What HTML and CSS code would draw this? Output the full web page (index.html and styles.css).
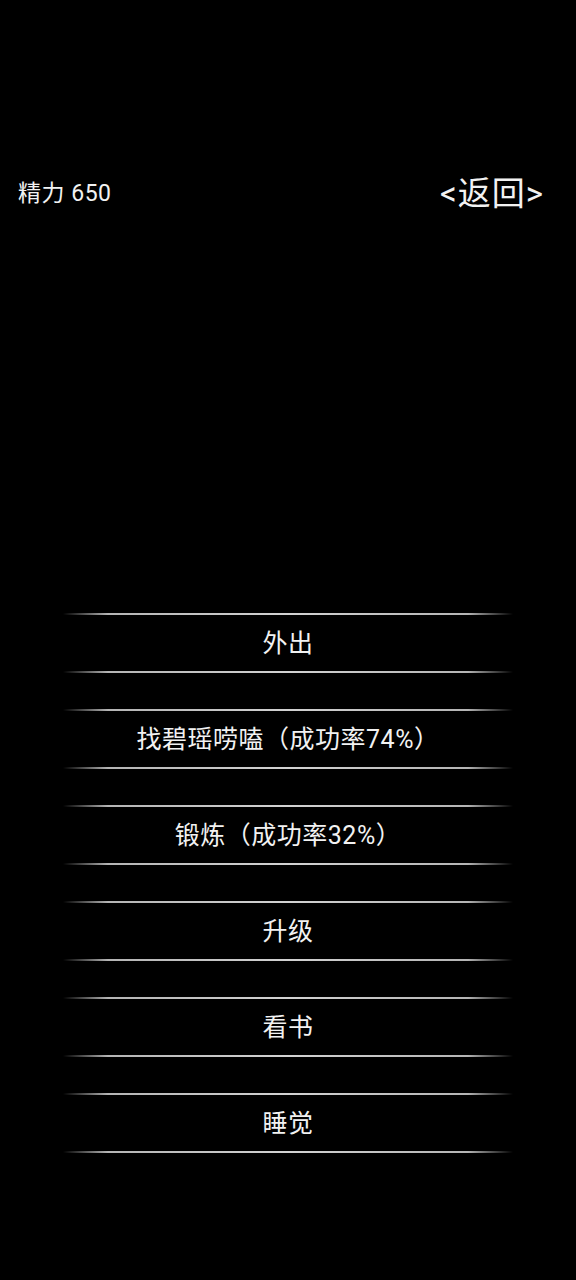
FILE: index.html
```html
<!DOCTYPE html>
<html lang="zh-CN">
<head>
    <meta charset="UTF-8">
    <meta name="viewport" content="width=device-width, initial-scale=1.0">
    <title>日常</title>
    <link rel="stylesheet" href="styles.css">
</head>
<body>
    <!-- 顶部状态栏 -->
    <div class="top-bar">
        <div class="energy">精力 650</div>
        <div class="back">&lt;返回&gt;</div>
    </div>

    <!-- 行动选项 -->
    <div class="options">
        <div class="option">外出</div>
        <div class="option">找碧瑶唠嗑（成功率74%）</div>
        <div class="option">锻炼（成功率32%）</div>
        <div class="option">升级</div>
        <div class="option">看书</div>
        <div class="option">睡觉</div>
    </div>
</body>
</html>
```

FILE: styles.css
```css
/* 全局样式 */
body {
    margin: 0;
    background-color: #000;
    color: #f2f2f2;
    font-family: Roboto, "Noto Sans CJK SC", sans-serif;
}

/* 顶部栏 */
.top-bar {
    display: flex;
    justify-content: space-between;
    align-items: center;
    height: 36px;
    margin-top: 173px;
    padding: 0 32px 0 18px;
}
.energy {
    font-size: 23px;
    letter-spacing: 0.5px;
}
.back {
    font-size: 33px;
    letter-spacing: 1px;
    cursor: pointer;
}

/* 选项列表 */
.options {
    display: flex;
    flex-direction: column;
    align-items: center;
    gap: 36px;
    margin-top: 404px;
}
.option {
    width: 450px;
    height: 60px;
    box-sizing: border-box;
    padding-bottom: 4px;
    display: flex;
    justify-content: center;
    align-items: center;
    font-size: 25px;
    letter-spacing: 0.5px;
    cursor: pointer;
    /* 上下两条渐隐的分隔线 */
    background-image:
        linear-gradient(to right, rgba(200, 200, 200, 0), rgba(200, 200, 200, 0.9) 10%, rgba(210, 210, 210, 1) 50%, rgba(200, 200, 200, 0.9) 90%, rgba(200, 200, 200, 0)),
        linear-gradient(to right, rgba(200, 200, 200, 0), rgba(200, 200, 200, 0.9) 10%, rgba(210, 210, 210, 1) 50%, rgba(200, 200, 200, 0.9) 90%, rgba(200, 200, 200, 0));
    background-size: 100% 2px;
    background-position: top, bottom;
    background-repeat: no-repeat;
}
```
